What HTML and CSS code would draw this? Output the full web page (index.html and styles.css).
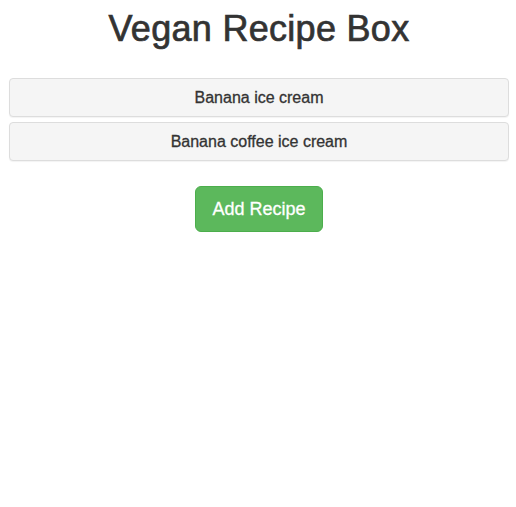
FILE: index.html
```html
<!DOCTYPE html>
<html>
<head>
<meta charset="utf-8">
<title>Vegan Recipe Box</title>
<link rel="stylesheet" href="styles.css">
</head>
<body>
<div class="app">
  <h1 class="title">Vegan Recipe Box</h1>
  <div class="recipes">
    <div class="recipe"><h4 class="recipe-title">Banana ice cream</h4></div>
    <div class="recipe"><h4 class="recipe-title">Banana coffee ice cream</h4></div>
  </div>
  <div class="actions">
    <button class="btn-add" type="button">Add Recipe</button>
  </div>
</div>
</body>
</html>
```

FILE: styles.css
```css
* { box-sizing: border-box; }
html, body {
  margin: 0;
  padding: 0;
  background: #fff;
}
body {
  font-family: "Liberation Sans", Arial, Helvetica, sans-serif;
  color: #333;
  font-size: 14px;
  line-height: 1.42857;
}
.app {
  padding: 0 7px 0 9px;
}
.title {
  margin: 9px 0 0;
  font-size: 36px;
  font-weight: 500;
  line-height: 40px;
  letter-spacing: 0.3px;
  -webkit-text-stroke: 0.7px #333;
  text-align: center;
  color: #333;
}
.recipes {
  margin-top: 29px;
  display: flex;
  flex-direction: column;
  gap: 5px;
}
.recipe {
  background: #f5f5f5;
  border: 1px solid #ddd;
  border-radius: 4px;
  box-shadow: 0 1px 1px rgba(0,0,0,0.05);
  padding: 10px 15px;
}
.recipe-title {
  margin: 0;
  font-size: 16px;
  font-weight: 500;
  line-height: 17px;
  -webkit-text-stroke: 0.3px #333;
  text-align: center;
  color: #333;
}
.actions {
  display: flex;
  justify-content: center;
  margin-top: 25px;
}
.btn-add {
  font-family: "Liberation Sans", Arial, Helvetica, sans-serif;
  font-size: 18px;
  line-height: 24px;
  padding: 10px 16px;
  border-radius: 6px;
  color: #fff;
  -webkit-text-stroke: 0.3px #fff;
  background: #5cb85c;
  border: 1px solid #4cae4c;
  cursor: pointer;
}
```
